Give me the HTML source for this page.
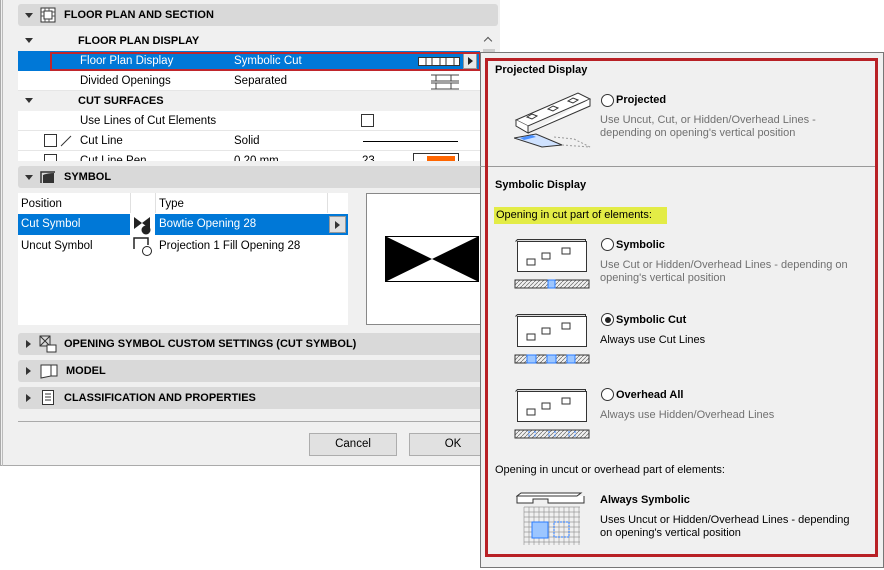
<!DOCTYPE html>
<html><head><style>
*{box-sizing:border-box;margin:0;padding:0}
body{width:884px;height:570px;background:#fff;font-family:"Liberation Sans",sans-serif;font-size:11.5px;color:#000;position:relative;overflow:hidden}
.a{position:absolute}
.hdr{position:absolute;left:18px;width:480px;height:22px;background:#d9d9d9;border-radius:3px;font-weight:bold;font-size:11px}
.hdr span{position:absolute;top:5px}
.tri{position:absolute;width:0;height:0}
.td{border-left:4px solid transparent;border-right:4px solid transparent;border-top:5px solid #333}
.tr{border-top:4px solid transparent;border-bottom:4px solid transparent;border-left:5px solid #333}
.row{position:absolute;left:18px;width:462px;height:20px;background:#fff;border-bottom:1px solid #e6e6e6}
.row span{position:absolute;top:4px}
.gray{color:#707070}
.cb{position:absolute;width:13px;height:13px;border:1px solid #333;background:#fff}
.rad{position:absolute;width:13px;height:13px;border:1px solid #333;border-radius:50%;background:#fff}
</style></head><body>
<div class="a" style="left:0;top:0;width:500px;height:466px;background:#f0f0f0;border-left:1px solid #aaa;border-bottom:1px solid #aaa"></div>
<div class="a" style="left:2px;top:0;width:1px;height:466px;background:#bbb"></div>

<div class="hdr" style="top:4px"><div class="tri td" style="left:7px;top:9px"></div>
<svg class="a" style="left:22px;top:3px" width="16" height="16"><rect x="1" y="1" width="14" height="14" fill="#fff" stroke="#333"/><rect x="4" y="4" width="8" height="8" fill="#fff" stroke="#333"/><path d="M1 5h3M1 9h3M12 5h3M12 9h3M5 1v3M9 1v3M5 12v3M9 12v3" stroke="#555"/></svg>
<span style="left:46px">FLOOR PLAN AND SECTION</span></div>

<div class="a" style="left:18px;top:31px;width:462px;height:20px;background:#f0f0f0"><div class="tri td" style="left:7px;top:7px"></div><span class="a" style="left:60px;top:4px;font-weight:bold;font-size:11px">FLOOR PLAN DISPLAY</span></div>
<div class="row" style="top:51px;background:#0078d7;color:#fff;border:none"><span style="left:62px">Floor Plan Display</span><span style="left:216px">Symbolic Cut</span>
<svg class="a" style="left:400px;top:6px" width="42" height="9"><rect x="0.5" y="0.5" width="41" height="8" fill="#fff" stroke="#333"/><path d="M8 0v9M14 0v9M22 0v9M28 0v9M36 0v9" stroke="#333"/></svg>
<div class="a" style="left:445px;top:2px;width:14px;height:16px;background:#e8e8e8;border:1px solid #999"><div class="tri tr" style="left:4px;top:3px;border-left-color:#222"></div></div></div>
<div class="a" style="left:50px;top:52px;width:431px;height:19px;border:2px solid #c0262c"></div>
<div class="row" style="top:71px"><span style="left:62px">Divided Openings</span><span style="left:216px">Separated</span>
<svg class="a" style="left:413px;top:3px" width="28" height="16"><path d="M0 1h28M0 7h28M0 9h28M0 15h28M5 1v6M20 1v6M5 9v6M20 9v6" stroke="#444" fill="none"/></svg></div>
<div class="a" style="left:18px;top:91px;width:462px;height:20px;background:#f0f0f0"><div class="tri td" style="left:7px;top:7px"></div><span class="a" style="left:60px;top:4px;font-weight:bold;font-size:11px">CUT SURFACES</span></div>
<div class="row" style="top:111px"><span style="left:62px">Use Lines of Cut Elements</span><div class="cb" style="left:343px;top:3px"></div></div>
<div class="row" style="top:131px"><div class="cb" style="left:26px;top:3px"></div><svg class="a" style="left:42px;top:4px" width="12" height="12"><path d="M1 11L11 1" stroke="#333"/></svg><span style="left:62px">Cut Line</span><span style="left:216px">Solid</span><div class="a" style="left:345px;top:10px;width:95px;height:1px;background:#000"></div></div>
<div class="a" style="left:18px;top:151px;width:462px;height:10px;overflow:hidden;background:#fff"><div class="row" style="top:0;left:0"><div class="cb" style="left:26px;top:3px"></div><span style="left:62px">Cut Line Pen</span><span style="left:216px">0.20 mm</span><span style="left:344px">23</span><div class="a" style="left:395px;top:2px;width:46px;height:14px;border:1px solid #333"><div class="a" style="left:13px;top:2px;width:28px;height:9px;background:#f60"></div></div></div></div>
<div class="a" style="left:481px;top:31px;width:16px;height:130px;background:#f0f0f0"><div class="a" style="left:4px;top:7px;width:6px;height:6px;border-left:1.5px solid #555;border-top:1.5px solid #555;transform:rotate(45deg)"></div><div class="a" style="left:2px;top:18px;width:12px;height:100px;background:#ccc"></div></div>

<div class="hdr" style="top:166px"><div class="tri td" style="left:7px;top:9px"></div>
<svg class="a" style="left:22px;top:4px" width="16" height="14"><path d="M1 13V2h14" fill="none" stroke="#333" stroke-width="1.5"/><path d="M3 13V5Q8 3 14 3V13Z" fill="#333"/></svg>
<span style="left:46px">SYMBOL</span></div>

<div class="a" style="left:18px;top:193px;width:330px;height:132px;background:#fff"></div>
<div class="a" style="left:348px;top:193px;width:10px;height:132px;background:#f0f0f0"></div>
<span class="a" style="left:21px;top:198px">Position</span><span class="a" style="left:159px;top:198px">Type</span>
<div class="a" style="left:130px;top:193px;width:1px;height:20px;background:#e0e0e0"></div><div class="a" style="left:155px;top:193px;width:1px;height:20px;background:#e0e0e0"></div><div class="a" style="left:327px;top:193px;width:1px;height:20px;background:#e0e0e0"></div>
<div class="a" style="left:18px;top:214px;width:112px;height:21px;background:#0078d7"></div>
<div class="a" style="left:155px;top:214px;width:193px;height:21px;background:#0078d7"></div>
<span class="a" style="left:21px;top:218px;color:#fff">Cut Symbol</span><span class="a" style="left:159px;top:218px;color:#fff">Bowtie Opening 28</span>
<div class="a" style="left:329px;top:216px;width:17px;height:17px;background:#e0e0e0;border:1px solid #999"><div class="tri tr" style="left:5px;top:4px"></div></div>
<svg class="a" style="left:133px;top:215px" width="20" height="20"><path d="M1 2L9 8L1 14Z M17 2L9 8L17 14Z" fill="#222"/><circle cx="13" cy="15" r="4.5" fill="#222"/></svg>
<span class="a" style="left:21px;top:240px">Uncut Symbol</span><span class="a" style="left:159px;top:240px">Projection 1 Fill Opening 28</span>
<svg class="a" style="left:133px;top:236px" width="20" height="20"><path d="M1 13V2h14v7" fill="none" stroke="#222" stroke-width="1.5"/><circle cx="14" cy="15" r="4.5" fill="#fff" stroke="#222"/></svg>
<div class="a" style="left:366px;top:193px;width:120px;height:132px;background:#fff;border:1px solid #888"></div>
<svg class="a" style="left:385px;top:236px" width="95" height="47"><path d="M0 0L47 23L0 46Z M94 0L47 23L94 46Z" fill="#000"/><rect x="0.5" y="0.5" width="93" height="45" fill="none" stroke="#000"/></svg>

<div class="hdr" style="top:333px"><div class="tri tr" style="left:8px;top:7px"></div>
<svg class="a" style="left:21px;top:2px" width="18" height="18"><rect x="1" y="1" width="10" height="10" fill="none" stroke="#333"/><path d="M1 1l10 10M11 1L1 11" stroke="#333"/><rect x="8" y="10" width="9" height="7" fill="#fff" stroke="#333"/></svg>
<span style="left:46px">OPENING SYMBOL CUSTOM SETTINGS (CUT SYMBOL)</span></div>
<div class="hdr" style="top:360px"><div class="tri tr" style="left:8px;top:7px"></div>
<svg class="a" style="left:22px;top:3px" width="18" height="16"><path d="M1 15V2h10v11zM11 2h6v11h-6" fill="#fff" stroke="#333"/></svg>
<span style="left:48px">MODEL</span></div>
<div class="hdr" style="top:387px"><div class="tri tr" style="left:8px;top:7px"></div>
<svg class="a" style="left:24px;top:3px" width="13" height="16"><rect x="0.5" y="0.5" width="11" height="14" fill="#fff" stroke="#333"/><path d="M3 4h6M3 7h6M3 10h6" stroke="#333"/></svg>
<span style="left:46px">CLASSIFICATION AND PROPERTIES</span></div>
<div class="a" style="left:18px;top:421px;width:480px;height:1px;background:#aaa"></div>
<div class="a" style="left:309px;top:433px;width:88px;height:23px;background:#e1e1e1;border:1px solid #adadad;text-align:center;line-height:21px">Cancel</div>
<div class="a" style="left:409px;top:433px;width:88px;height:23px;background:#e1e1e1;border:1px solid #adadad;text-align:center;line-height:21px">OK</div>

<div class="a" style="left:480px;top:52px;width:404px;height:516px;background:#f0f0f0;border:1px solid #777"></div>
<div class="a" style="left:480px;top:166px;width:398px;height:1px;background:#999"></div>
<div class="a" style="left:485px;top:58px;width:393px;height:499px;border:3px solid #b82025"></div>
<span class="a" style="left:495px;top:64px;font-weight:bold;font-size:11px">Projected Display</span>
<svg class="a" style="left:514px;top:92px" width="80" height="56"><path d="M2 28L64 1L76 7L14 34Z" fill="#fff" stroke="#333"/><path d="M2 28v6L14 41v-7M14 41L76 14V7" fill="#fff" stroke="#333"/><path d="M13 25l5-3l5 2l-5 3z M34 17l5-3l5 2l-5 3z M54 9l5-3l5 2l-5 3z" fill="none" stroke="#333"/><path d="M0 46L22 42L48 53L28 55Z" fill="#cfe2ff" stroke="#333"/><path d="M6 46l12-3l4 2l-12 3z" fill="#4a90ff"/><path d="M48 53L76 55L60 47L40 45" fill="none" stroke="#999" stroke-dasharray="2 2"/></svg>
<div class="rad" style="left:601px;top:94px"></div><span class="a" style="left:616px;top:94px;font-weight:bold;font-size:11px">Projected</span>
<span class="a gray" style="left:600px;top:114px;line-height:13px;font-size:11px">Use Uncut, Cut, or Hidden/Overhead Lines -<br>depending on opening's vertical position</span>

<span class="a" style="left:495px;top:179px;font-weight:bold;font-size:11px">Symbolic Display</span>
<div class="a" style="left:494px;top:207px;width:173px;height:17px;background:#e3ec46"></div>
<span class="a" style="left:496px;top:209px;font-size:11px">Opening in cut part of elements:</span>

<svg width="0" height="0" style="position:absolute"><defs>
<pattern id="h" width="4" height="4" patternUnits="userSpaceOnUse"><path d="M0 4L4 0" stroke="#666" stroke-width="0.7"/></pattern></defs></svg>
<svg class="a" style="left:514px;top:238px" width="78" height="54"><path d="M1.5 3.5l2-2h68v30" fill="#ddd" stroke="#333"/><rect x="3.5" y="3.5" width="69" height="30" fill="#fff" stroke="#333"/><path d="M13 21h8v6h-8zM28 15h8v6h-8zM48 10h8v6h-8z" fill="none" stroke="#333"/><rect x="1" y="42" width="74" height="8" fill="url(#h)" stroke="#333"/><rect x="34" y="42" width="7" height="8" fill="#9cc6ff" stroke="#2a7cff"/></svg>
<div class="rad" style="left:601px;top:238px"></div><span class="a" style="left:616px;top:239px;font-weight:bold;font-size:11px">Symbolic</span>
<span class="a gray" style="left:600px;top:259px;line-height:13px;font-size:11px">Use Cut or Hidden/Overhead Lines - depending on<br>opening's vertical position</span>

<svg class="a" style="left:514px;top:313px" width="78" height="54"><path d="M1.5 3.5l2-2h68v30" fill="#ddd" stroke="#333"/><rect x="3.5" y="3.5" width="69" height="30" fill="#fff" stroke="#333"/><path d="M13 21h8v6h-8zM28 15h8v6h-8zM48 10h8v6h-8z" fill="none" stroke="#333"/><rect x="1" y="42" width="74" height="8" fill="url(#h)" stroke="#333"/><rect x="13" y="42" width="9" height="8" fill="#9cc6ff" stroke="#2a7cff"/><rect x="33" y="42" width="9" height="8" fill="#9cc6ff" stroke="#2a7cff"/><rect x="53" y="42" width="8" height="8" fill="#9cc6ff" stroke="#2a7cff"/></svg>
<div class="rad" style="left:601px;top:313px"><div class="a" style="left:2.5px;top:2.5px;width:6px;height:6px;border-radius:50%;background:#222"></div></div><span class="a" style="left:616px;top:314px;font-weight:bold;font-size:11px">Symbolic Cut</span>
<span class="a" style="left:600px;top:334px;font-size:11px">Always use Cut Lines</span>

<svg class="a" style="left:514px;top:388px" width="78" height="54"><path d="M1.5 3.5l2-2h68v30" fill="#ddd" stroke="#333"/><rect x="3.5" y="3.5" width="69" height="30" fill="#fff" stroke="#333"/><path d="M13 21h8v6h-8zM28 15h8v6h-8zM48 10h8v6h-8z" fill="none" stroke="#333"/><rect x="1" y="42" width="74" height="8" fill="url(#h)" stroke="#333"/><path d="M15 43v6M21 43v6M35 43v6M41 43v6M55 43v6M61 43v6" stroke="#2a7cff" stroke-dasharray="2 1.5"/></svg>
<div class="rad" style="left:601px;top:388px"></div><span class="a" style="left:616px;top:389px;font-weight:bold;font-size:11px">Overhead All</span>
<span class="a gray" style="left:600px;top:409px;font-size:11px">Always use Hidden/Overhead Lines</span>

<span class="a" style="left:495px;top:464px;font-size:11px">Opening in uncut or overhead part of elements:</span>
<svg class="a" style="left:516px;top:492px" width="70" height="54"><path d="M1 4L5 1h60l-4 3zM1 4v7h16v-4h15v4h36V4" fill="#fff" stroke="#333"/><g stroke="#999" stroke-width="0.7"><path d="M8 15h56M8 20h56M8 25h56M8 30h56M8 35h56M8 40h56M8 45h56M8 50h56M8 15v38M13 15v38M18 15v38M23 15v38M28 15v38M33 15v38M38 15v38M43 15v38M48 15v38M53 15v38M58 15v38M63 15v38"/></g><rect x="16" y="30" width="16" height="16" fill="#9cc6ff" stroke="#2a7cff"/><rect x="38" y="30" width="15" height="15" fill="none" stroke="#2a7cff" stroke-dasharray="2 1"/></svg>
<span class="a" style="left:600px;top:494px;font-weight:bold;font-size:11px">Always Symbolic</span>
<span class="a" style="left:600px;top:514px;line-height:13px;font-size:11px">Uses Uncut or Hidden/Overhead Lines - depending<br>on opening's vertical position</span>
</body></html>
